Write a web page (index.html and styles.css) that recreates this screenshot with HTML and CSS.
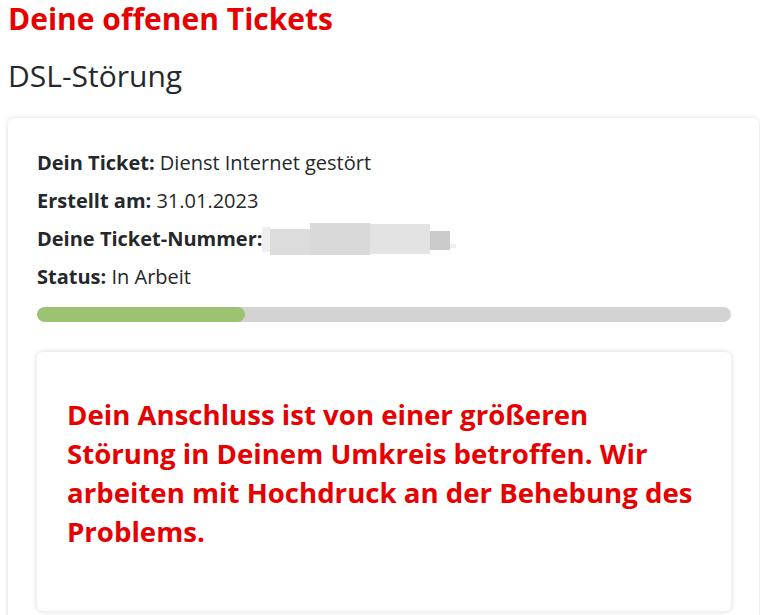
FILE: index.html
```html
<!DOCTYPE html>
<html lang="de">
<head>
<meta charset="utf-8">
<link rel="stylesheet" href="styles.css">
</head>
<body>
<h1 class="title">Deine offenen Tickets</h1>
<h2 class="subtitle">DSL-Störung</h2>
<div class="card">
  <p class="row"><b>Dein Ticket:</b> Dienst Internet gestört</p>
  <p class="row"><b>Erstellt am:</b> 31.01.2023</p>
  <p class="row"><b>Deine Ticket-Nummer:</b><span class="blur"><span class="px p1"></span><span class="px p2"></span><span class="px p3"></span><span class="px p4"></span><span class="px p5"></span><span class="px p6"></span></span></p>
  <p class="row"><b>Status:</b> In Arbeit</p>
  <div class="progress"><div class="fill" style="width:30%"></div></div>
  <div class="notice">
    <p class="notice-text">Dein Anschluss ist von einer größeren Störung in Deinem Umkreis betroffen. Wir arbeiten mit Hochdruck an der Behebung des Problems.</p>
  </div>
</div>
</body>
</html>
```
FILE: styles.css
```css
html, body {
  margin: 0;
  background: #fff;
}
body {
  padding: 0 1px 0 8px;
  font-family: "Open Sans", "Noto Sans", sans-serif;
  color: #25282b;
  overflow: hidden;
}
.title {
  margin: 0;
  font-size: 30px;
  line-height: 38px;
  font-weight: 700;
  color: #e60000;
}
.subtitle {
  margin: 18px 0 0;
  font-size: 30px;
  line-height: 40px;
  font-weight: 400;
  color: #25282b;
}
.card {
  margin-top: 22px;
  background: #fff;
  border-radius: 6px;
  box-shadow: 0 0 5px rgba(0,0,0,0.15);
  padding: 26px 28px 40px 29px;
}
.row {
  margin: 0;
  font-size: 20px;
  line-height: 38px;
  display: flex;
  align-items: center;
  white-space: pre;
}
.row b {
  font-weight: 700;
}
.blur {
  display: flex;
  align-items: flex-start;
  height: 32px;
}
.px {
  display: block;
}
.p1 { width: 8px; height: 25px; margin-top: 4px; background: #efefef; }
.p2 { width: 40px; height: 26px; margin-top: 6px; background: #dcdcdc; }
.p3 { width: 60px; height: 32px; background: #d9d9d9; }
.p4 { width: 60px; height: 30px; margin-top: 1px; background: #e3e3e3; }
.p5 { width: 20px; height: 19px; margin-top: 8px; background: #cbcbcb; }
.p6 { width: 6px; height: 4px; margin-top: 21px; background: #efefef; }
.progress {
  margin-top: 11px;
  height: 15px;
  border-radius: 8px;
  background: #d3d3d3;
  overflow: hidden;
}
.fill {
  height: 100%;
  background: #9bc372;
  border-radius: 8px;
}
.notice {
  margin-top: 30px;
  border-radius: 6px;
  box-shadow: 0 0 6px rgba(0,0,0,0.16);
  padding: 43px 36px 60px 30px;
}
.notice-text {
  margin: 0;
  font-size: 27.6px;
  line-height: 39px;
  font-weight: 700;
  color: #e60000;
}
```
